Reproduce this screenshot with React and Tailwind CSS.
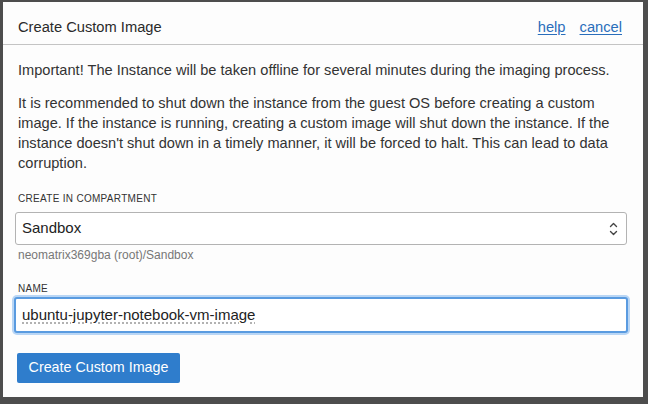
export default function App() {
  const font = { fontFamily: '"Liberation Sans", Arial, Helvetica, sans-serif' };
  return (
    <div className="w-[648px] h-[404px] bg-[#4d4d4d] pt-[2px] pl-[3px] pr-[5px] pb-[7px] overflow-hidden" style={font}>
      <div className="w-full h-full bg-[#fdfdfd] flex flex-col">
        <div className="h-[43px] shrink-0 flex items-center justify-between pl-[15px] pr-[21px] border-b border-[#c4c4c4]">
          <span className="text-[14.7px] text-[#2a2a2a] pt-[8px]">Create Custom Image</span>
          <div className="flex gap-[14px] text-[14.7px] text-[#2a6ebb] pt-[8px]">
            <span className="underline underline-offset-2">help</span>
            <span className="underline underline-offset-2">cancel</span>
          </div>
        </div>
        <div className="px-[15px] pt-[15px] text-[#333]">
          <p className="text-[14.6px] leading-[20px]">
            Important! The Instance will be taken offline for several minutes during the imaging process.
          </p>
          <p className="mt-[13px] text-[14.6px] leading-[20px]">
            It is recommended to shut down the instance from the guest OS before creating a custom image. If the instance is running, creating a custom image will shut down the instance. If the instance doesn't shut down in a timely manner, it will be forced to halt. This can lead to data corruption.
          </p>
          <div className="mt-[20px] text-[10px] leading-[12px] tracking-[0.3px] text-[#333]">CREATE IN COMPARTMENT</div>
          <div className="mt-[7px] ml-[-3px] w-[612px] h-[33px] border border-[#b3b3b3] rounded-[3px] bg-white flex items-center justify-between pl-[6px] pr-[8px]">
            <span className="text-[15px] text-[#222]">Sandbox</span>
            <svg width="9" height="16" viewBox="0 0 9 16" fill="none" stroke="#444" strokeWidth="1.4" strokeLinecap="round" strokeLinejoin="round">
              <path d="M1.5 5.5 L4.5 2.5 L7.5 5.5" />
              <path d="M1.5 10.5 L4.5 13.5 L7.5 10.5" />
            </svg>
          </div>
          <div className="mt-[3px] text-[12px] leading-[14px] text-[#777]">neomatrix369gba (root)/Sandbox</div>
          <div className="mt-[21px] text-[10px] leading-[12px] tracking-[0.3px] text-[#333]">NAME</div>
          <div className="mt-[2px] ml-[-4px] w-[614px] h-[36px] rounded-[3px] border-2 border-[#5a9be0] shadow-[0_0_0_2px_#b9d6f5] bg-white flex items-center pl-[6px]">
            <span className="text-[15px] text-[#222] underline decoration-dotted decoration-[#999] underline-offset-[3px]">ubuntu-jupyter-notebook-vm-image</span>
          </div>
          <button className="mt-[20px] ml-[-1px] w-[163px] h-[30px] rounded-[2px] bg-[#2f7dcc] text-white text-[14.3px] flex items-center justify-center">
            Create Custom Image
          </button>
        </div>
      </div>
    </div>
  );
}
